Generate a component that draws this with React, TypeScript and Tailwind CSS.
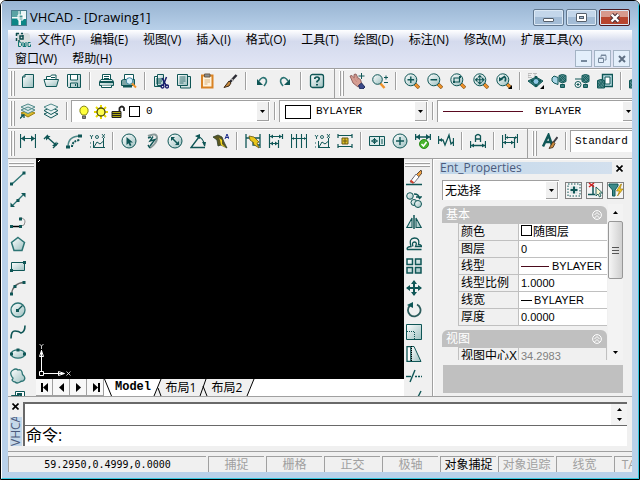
import type { ReactNode } from "react"

const TEAL = "#0f5656"

const lens = (
  <>
    <path d="M11 11l4 4" stroke="#8a5a20" strokeWidth="3.4" />
    <path d="M11 11l3.6 3.6" stroke="#f0932b" strokeWidth="2.2" />
    <circle cx="6.8" cy="6.8" r="6" fill="url(#glass)" />
  </>
)

const cylinder = (
  <>
    <path d="M8 2.500q3.500-2 7 0v6L11.500 10 8 8.500z" fill="#4f8a8a" />
    <path d="M9 3l5 5M11 3l4 4M9 6l3 3M14 3l-5 5M12 3l-3 3M15 6l-3 3" strokeWidth=".7" />
    <path d="M9.500 11.500h4v3h-4z" fill="#3d8080" />
  </>
)

const ordinate = (
  <>
    <path d="M4.500 8v7M4.500 14.500H16M5 14l3-5 3 2 3-2.500M14.500 5v9" />
    <path d="M1 2l1.500 2L4 2M2.500 4v2M13 1l3 4M16 1l-3 4" strokeWidth=".9" />
    <circle cx="8" cy="4" r="1.500" strokeWidth=".9" />
    <path d="M1 10h2M1 14h2" strokeDasharray="1 1" />
  </>
)

const bolt = <path d="M4 3l5 1 5 5-2 1 2 5-6-4 1-1-4-3z" fill="#e8c61c" stroke="#6b5a12" strokeWidth=".8" />

const icons: Record<string, ReactNode> = {
  new: (
    <path d="M5 1.500h8.500v13h-11V4zM5 1.500V4H2.500" fill="url(#glass)" />
  ),
  open: (
    <>
      <path d="M3.500 8V3.500h4l1-1.500h4.500v4" fill="#fff" />
      <path d="M1 6.500h11l3.500 0-2 7H3z" fill="url(#glass)" />
      <path d="M8 4.500h4" />
    </>
  ),
  save: (
    <>
      <path d="M1.500 1.500h13v13h-12l-1-1z" fill="url(#glass)" />
      <path d="M4.500 2v5h7V2" fill="#fff" />
      <path d="M4.500 14v-4h7v4M9.500 11v2" />
    </>
  ),
  print: (
    <>
      <path d="M4.500 7V1.500h8V7M6 3.500h5M6 5.500h5" fill="#fff" />
      <path d="M3 6.500h11l1.500 2v4h-14v-4z" fill="url(#glass)" />
      <path d="M2 9h13" strokeWidth="2" />
      <path d="M3.500 12.500v2h10v-2" fill="#fff" />
    </>
  ),
  preview: (
    <>
      <path d="M3.500 6V1.500h9V6" fill="#fff" />
      <path d="M2.500 6.500h11v6h-13v-5z" fill="#7da5a5" />
      <path d="M2 13.500h9" strokeWidth="2" />
      <circle cx="8.500" cy="8" r="3.300" fill="#d6f0fb" stroke="#3f87a0" />
      <path d="M11 10.500l4 4" stroke="#f0932b" strokeWidth="2" />
    </>
  ),
  cut: (
    <>
      <path d="M1.500 3.500h7v10h-7z" fill="url(#glass)" />
      <path d="M4.500 1.500h6v11h-6zM3 6h6M3 8h6M3 10h5" fill="url(#glass)" />
      <path d="M9 5l4.500 8M13.500 4L10 13" stroke="#161a6b" strokeWidth="1.500" />
      <circle cx="9.500" cy="13.500" r="1.500" stroke="#161a6b" strokeWidth="1.300" />
      <circle cx="14" cy="13.500" r="1.500" stroke="#161a6b" strokeWidth="1.300" />
    </>
  ),
  copy: (
    <>
      <path d="M4.500 3.500h10v11.500h-10z" fill="#d5e5e5" />
      <path d="M1.500 1.500h10v11h-10z" fill="url(#glass)" />
      <path d="M3.500 4h6M3.500 6h6M3.500 8h6M3.500 10h4" strokeWidth=".8" />
    </>
  ),
  paste: (
    <>
      <path d="M3 2.500h10.500v12H3z" fill="#fff3dc" stroke="#d98324" strokeWidth="2" />
      <path d="M5.500 1h5.500v3H5.500z" fill="#8a8f94" stroke="#6c5a45" />
      <path d="M5.500 7h5.500M5.500 9h5.500M5.500 11h3" stroke="#d9b27e" />
    </>
  ),
  brush: (
    <>
      <path d="M14.500 2L8 9" stroke="#2c2c34" strokeWidth="2.500" />
      <path d="M9.500 6l2 2" stroke="#b8b8b8" strokeWidth="1.500" />
      <path d="M7 8l2 2-2 3-5 1.500z" fill="#c98a3c" stroke="#3c2a18" />
    </>
  ),
  undo: (
    <>
      <path d="M5 8q3-5 6.500-2.500 2.500 3-1.500 7.500" strokeWidth="1.600" stroke="#2c7474" />
      <path d="M3 6v6h6z" fill={TEAL} stroke="none" />
    </>
  ),
  redo: (
    <>
      <path d="M11 8q-3-5-6.500-2.500Q2 8.500 6 13" strokeWidth="1.600" stroke="#2c7474" />
      <path d="M13 6v6H7z" fill={TEAL} stroke="none" />
    </>
  ),
  help: (
    <>
      <rect x="1.500" y="1.500" width="13" height="13" rx="2" fill="url(#glass)" strokeWidth="1.300" />
      <path d="M5.800 6q0-2 2.200-2t2.200 2q0 1-2.200 2.500v1" strokeWidth="1.700" />
      <path d="M7 11h2v1.500H7z" fill={TEAL} stroke="none" />
    </>
  ),
  pan: (
    <>
      <path d="M1 3l2-.5L5 5V1.500L7 1l2 4 2.500 1.500L13 12l-4 2-5-4z" fill="#d59d92" stroke="#8a5a58" strokeWidth=".9" />
      <path d="M3 3l5 6M6 2l3 5" stroke="#c08880" strokeWidth=".8" />
      <path d="M9.500 12.500l3-2.500 3.500 4-2 2h-3z" fill="#3c4a8a" stroke="#23305c" />
      <path d="M12.500 0v6M9.500 3h6" />
    </>
  ),
  zoomRealtime: (
    <>
      <path d="M8 10l4.500 5" stroke="#f0932b" strokeWidth="2.500" />
      <circle cx="5.500" cy="6.500" r="4.800" fill="url(#glass)" />
      <path d="M12 4.500h4M14 2.500v4M12 9.500h4" />
    </>
  ),
  zoomIn: (<>{lens}<path d="M3.500 6.800h6.600M6.800 3.500v6.600" strokeWidth="1.400" /></>),
  zoomOut: (<>{lens}<path d="M3.500 6.800h6.600" strokeWidth="1.400" /></>),
  zoomWindow: (<>{lens}<path d="M4 5h5.500v4H4z" strokeWidth="1.200" /><path d="M3 9h2M9 4h2" strokeWidth="2" /></>),
  zoomExtents: (<>{lens}<path d="M2.500 6.800h8.600M6.800 2.500v8.600M4.500 5L2.500 6.800l2 1.800M9 5l2 1.800-2 1.800M5 4.500l1.800-2 1.800 2M5 9l1.800 2 1.800-2" strokeWidth="1.100" /></>),
  zoomPrev: (
    <>
      {lens}
      <path d="M5 6l3.500-2.500q2 2 .5 5" strokeWidth="1.600" />
      <path d="M3 4v4.500l4-2z" fill={TEAL} stroke="none" />
      <path d="M16 12v4h-4z" fill="#000" stroke="none" />
    </>
  ),
  orbit: (
    <>
      <path d="M0 8l8-4 7 4-7 6z" fill="#3d8080" />
      <path d="M0 .5h4M0 2.500h3M0 .5v4h4M5 .5h4M7 .5v4" stroke="#b0b0b0" strokeWidth=".8" />
      <path d="M8 3v11M3 8h10" strokeWidth="2.500" />
      <circle cx="8" cy="8.500" r="3" fill="#8fc7e6" />
      <path d="M16 12v4h-4z" fill="#000" stroke="none" />
    </>
  ),
  shade: (<><path d="M3 3l4 1.500v7L3 10 1 8V5z" fill="#a9d5e6" />{cylinder}</>),
  lightAdd: (<>{cylinder}<path d="M1 6h7" /><circle cx="4" cy="11.500" r="3" fill="#fff" /><path d="M2.500 11.500h3M4 10v3" /></>),
  blockEdit: (
    <>
      <path d="M5.500 1.500h10v12h-10z" fill="#b8dbe2" strokeWidth="1.400" />
      <path d="M8 4h5v7H8z" fill="#fff" />
      <path d="M.5 7.500q3.500-2 7 0V15h-7z" fill="#4f8a8a" />
      <path d="M1 7l6 7M4 7l3 4M1 10l4 5M7 7l-6 7" strokeWidth=".7" />
    </>
  ),
  layerManager: (
    <>
      <path d="M1 10l7-3 7 3-7 4z" fill="#d8b92c" stroke="#a08010" />
      <path d="M1 7l7-3 7 3-7 3.500zM1 4l7-3 7 3-7 3.500z" fill="#dce9e9" stroke="#4f8a8a" />
      <path d="M0 15.500l3-3M1 12h3v3" strokeWidth="1.300" />
    </>
  ),
  layers: (
    <>
      <path d="M1 11l7-3 7 3-7 4z" fill="#eaf2f2" />
      <path d="M1 7.500l7-3 7 3-7 4z" fill="#eaf2f2" />
      <path d="M1 4l7-3 7 3-7 4z" fill="#eaf2f2" stroke="#4f8a8a" />
    </>
  ),
  dimLinear: (<><path d="M.5 1v14M15.500 1v14M1 5.500h14" strokeWidth="1.200" /><path d="M1 5.500l4-3v6zM15 5.500l-4-3v6z" fill={TEAL} stroke="none" /></>),
  dimAligned: (<><path d="M1 6l4-4M10 15l5-5M4 4l9 8" strokeWidth="1.400" /><path d="M3 3h4.500L3 7.500zM13.500 13H9l4.500-4.500z" fill={TEAL} stroke="none" /></>),
  dimArc: (<><path d="M2 14Q2 3 14 3" strokeWidth="1.500" stroke="#4f8a8a" /><path d="M6 14q0-6 8-7" strokeDasharray="2 1" strokeWidth="2" /><path d="M12 1.500h4v3h-4zM0 12.500h4v3H0z" fill={TEAL} stroke="none" /></>),
  dimOrdinate: ordinate,
  dimRadius: (<><circle cx="8" cy="8" r="7" fill="url(#glass)" /><path d="M5.500 4v8l2-1.800 1.400 2.800 1.600-.8-1.400-2.700h2.900z" fill={TEAL} stroke="none" /></>),
  dimJogged: (<><path d="M4 3q9-4 9 2 0 5-7 10" strokeWidth="2" stroke="#8a9a9a" /><path d="M9 3.500L6 8l5-1.500L6 13" strokeWidth="1.400" /><path d="M4 5l3-1M4 12l2 3" strokeWidth="1.500" /></>),
  dimDiameter: (<><circle cx="8" cy="8" r="7" fill="url(#glass)" /><path d="M5 5l6 6" strokeWidth="1.500" /><path d="M4 4h4L4 8zM12 12H8l4-4z" fill={TEAL} stroke="none" /></>),
  dimAngular: (<><path d="M15 14.500H1L9 4" strokeWidth="1.400" /><path d="M7 3q7 2 7.500 10" strokeWidth="1.200" /><path d="M5 3l5-2v5zM12 9h4l-1 5z" fill={TEAL} stroke="none" /></>),
  dimQuick: (<><path d="M0 4l5-2 4 2 2 5 3 6-6-3-3 1-1-6z" fill="#5c5820" stroke="#2c3c2c" strokeWidth=".8" /><path d="M6 5l3 2v4l4 4-5-3-1-5z" fill="#f4d71e" stroke="none" /><path d="M12 6l2-5 2 5M12.500 4.500h3" stroke="#1c2c8c" /></>),
  dimQuickDim: (<><path d="M1 1v14M15 1v14M1 5h14M8 8v4h7" strokeWidth="1.300" />{bolt}</>),
  dimBaseline: (<><path d="M1.500 1v14M14.500 1v5M10.500 7v8M1.500 3.500h13M1.500 10.500h9" strokeWidth="1.200" /><path d="M2 3.500l3-2v4zM14 3.500l-3-2v4zM2 10.500l3-2v4zM10 10.500l-3-2v4z" fill={TEAL} stroke="none" /></>),
  dimContinue: (<><path d="M.5 1v14M5.500 1v14M10.500 1v14M15.500 1v14M0 5.500h16" strokeWidth="1.100" /><path d="M1 5.500l2-1.500v3zM15 5.500L13 4v3z" fill={TEAL} stroke="none" /></>),
  dimSpace: ordinate,
  dimBreak: (<><path d="M1 1v4M15 1v4M1 2.500h14M1 11v4M15 11v4M1 13.500h14" strokeWidth="1.200" /><path d="M5 5h6v6H5z" fill="#e3c22a" stroke="#6b5a12" /><path d="M8 5v6M6 8h4" stroke="#6b5a12" /></>),
  tolerance: (<><path d="M.5 3.500h15v9H.5zM10.500 3.500v9" fill="#d9e9e9" /><path d="M2 8h7M5.500 5v6M13 6v5" /><circle cx="5.500" cy="8" r="1.800" /></>),
  centerMark: (<><circle cx="8" cy="8" r="7" fill="url(#glass)" /><path d="M8 4v8M4 8h8" strokeWidth="1.400" /></>),
  inspect: (<><path d="M.5 1v6M15.500 1v6M0 4h16" strokeWidth="1.500" /><path d="M1 4l4-3v6zM15 4l-4-3v6z" fill={TEAL} stroke="none" /><circle cx="9" cy="11" r="4.500" fill="#49b52c" stroke="#2d8a1c" /><path d="M6.500 11l2 2 3-4" stroke="#fff" strokeWidth="1.600" /></>),
  jogLine: (<><path d="M.5 3v8M.5 7H5l2 5L11 2l2 9 2-2M15.500 5v8" strokeWidth="1.300" /><path d="M1 7l3-2v4z" fill={TEAL} stroke="none" /></>),
  dimEdit: (<><path d="M.5 8v7M15.500 8v7M1 12.500h14M5.500 9V3q2.500-3 5 0v6M5.500 6h5" strokeWidth="1.300" /><path d="M1 12.500l3-2v4zM15 12.500l-3-2v4z" fill={TEAL} stroke="none" /></>),
  dimUpdate: (<><path d="M.5 2v13M12.500 4v11M3.500 1v6M15.500 1v9M1 9.500h11M4 4.500h11" strokeWidth="1.200" /><path d="M1 9.500l3-2v4zM12 9.500l-3-2v4zM4 4.500l2-1.500v3zM15 4.500L13 3v3z" fill={TEAL} stroke="none" /></>),
  textStyle: (<><path d="M1 13.500L6.500 2 10 12M3.500 9h5" strokeWidth="2.500" /><path d="M15.500 4L11 10" stroke="#3c3c44" strokeWidth="2" /><path d="M11 8.500l2 2-2 4-4 1z" fill="#c98a3c" stroke="#3c2a18" strokeWidth=".8" /></>),
  line: (<><path d="M2 14L14 3" strokeWidth="1.300" stroke="#2c7474" /><path d="M0 12.500h3v3H0zM12.500 1.500h3v3h-3z" fill={TEAL} stroke="none" /></>),
  xline: (<><path d="M2 14L14 2" strokeWidth="1.300" stroke="#2c7474" /><path d="M6.500 7h3v3h-3zM11 1h4.500v4.500zM.5 10.500V15H5z" fill={TEAL} stroke="none" /></>),
  pline: (<><path d="M1 12.500h10" stroke="#000" strokeWidth="1.500" /><path d="M10 4q5 0 5 4t-4 4" stroke="#909090" /><path d="M0 11h3v3H0zM9 11h3v3H9zM9 3.500h3v3H9z" fill={TEAL} stroke="none" /></>),
  polygon: (<path d="M8 1.500l6.500 5L12 14.500H4L1.500 6.500z" fill="url(#glass)" stroke="#2c7474" strokeWidth="1.500" />),
  rect: (<><path d="M1.500 4.500h13v8h-13z" fill="url(#glass)" /><path d="M0 11h3v3H0zM13 3h3v3h-3z" fill={TEAL} stroke="none" /></>),
  arc: (<><path d="M1.500 14Q3 3 14 2.500" stroke="#6a6a6a" strokeWidth="1.300" /><path d="M0 12.500h3v3H0zM12.500 1h3v3h-3zM3.500 5h3v3h-3z" fill={TEAL} stroke="none" /></>),
  circle: (<><circle cx="8" cy="8" r="7" fill="url(#glass)" strokeWidth="1.300" stroke="#2c7474" /><path d="M8 8l4.500-4.500" strokeWidth="1.300" /><path d="M6 7h3v3H6z" fill={TEAL} stroke="none" /></>),
  spline: (<path d="M1 14.500Q1 7 5 7t6 2q4-1 4-7.500" strokeWidth="1.600" />),
  ellipse: (<><ellipse cx="8" cy="8" rx="7" ry="4.200" fill="url(#glass)" stroke="#2c7474" strokeWidth="1.200" /><path d="M0 6.500h3v3H0zM13 6.500h3v3h-3zM6.500 2.500h3v3h-3z" fill={TEAL} stroke="none" /></>),
  cloud: (<path d="M3 2q3-2 5 0 3-1 4 2 0 3 2 4 2 3-1 5-2 0-3 1-3 2-5 0-2 0-3-2 2-2 0-3Q-1 4 3 2z" fill="url(#glass)" stroke="#2c7474" strokeWidth="1.300" />),
  insert: (<><path d="M5.500 1.500h9v8h-9z" fill="#fff" /><path d="M1.500 5.500h8v8h-8z" fill="#d5e5e5" /><path d="M7 4h4v5" strokeWidth="2" /><path d="M10 7h4v5h-4z" fill="#e3c22a" /></>),
  erase: (<><path d="M15 0l1 3-6 7-4-1z" fill="#f0a040" stroke="#5a4a3a" /><path d="M10 4l3 3-5 6-4-1z" fill="#fff" stroke="#5a5a6a" strokeWidth=".8" /><path d="M4.500 10.500l3 2.500" stroke="#d0402c" strokeWidth="2" /><path d="M0 14.500h16" strokeWidth="1.300" /></>),
  copyObj: (<><circle cx="4" cy="4" r="3.300" fill="url(#glass)" /><circle cx="8" cy="10.500" r="3" fill="url(#glass)" /><circle cx="12" cy="12" r="3.500" fill="url(#glass)" /><path d="M8 2q5 0 5 4M10 5h5l-2 2" strokeWidth="1.500" /></>),
  mirror: (<><path d="M8 1v14" strokeWidth="1.500" /><path d="M6 4v9.500H.8zM10 4v9.500h5.200z" fill="url(#glass)" strokeWidth="1.100" /></>),
  offset: (<path d="M1 13.500q0-3 4-3Q2.500 2 8.500 2q5.500 0 4 6.500 3 0 3 2H9.500q2-4.500-1-4.500T7 10.500M1 13.500h14.500" strokeWidth="1.300" />),
  array: (<path d="M1 1h5.500v5.500H1zM9.500 1H15v5.500H9.500zM1 9.500h5.500V15H1zM9.500 9.500H15V15H9.500z" fill="url(#glass)" strokeWidth="1.500" />),
  move: (<><path d="M8 1v14M1 8h14" strokeWidth="2" /><path d="M8 0l3 4H5zM8 16l3-4H5zM0 8l4-3v6zM16 8l-4-3v6z" fill={TEAL} stroke="none" /></>),
  rotate: (<><path d="M4 3.500a6.300 6.300 0 1 0 7-1" strokeWidth="1.800" stroke="#2c5c5c" /><path d="M1 3l6-3v6z" fill={TEAL} stroke="none" /></>),
  scale: (<><path d="M.5.5h15v15H.5z" fill="url(#glass)" /><path d="M1 7.500h7.500V15" strokeDasharray="1 1" /></>),
  stretch: (<><path d="M1 .5h4v15H1z" fill="#fff" strokeWidth="1.300" /><path d="M5 .5h3l7 15H5z" fill="url(#glass)" /><path d="M5.500 0v16" strokeDasharray="1 1" stroke="#000" /></>),
  trim: (<><path d="M0 8.500h5" strokeWidth="1.400" /><path d="M4 14l5-12" strokeWidth="1.400" /><path d="M9 8.500h7" strokeDasharray="2 1" strokeWidth="1.400" /></>),
  extend: (<><path d="M11 9l4-8" strokeWidth="1.400" /><path d="M0 13h10" strokeDasharray="2 1" /></>),
  pick: (<><path d="M2 2h12v12H2z" strokeDasharray="1.500 1.500" /><path d="M4.500 4.500h7v7h-7z" fill="#cfe0e0" stroke="none" /><path d="M8 4.500v7M4.500 8h7" strokeWidth="2" /></>),
  select: (<><path d="M6 3v10M1 12.500h7" strokeWidth="1.500" /><path d="M2 1l5 4M7 1L2 5" stroke="#d02020" strokeWidth="1.500" /><path d="M9 5v9l2-2 1.500 3 1.500-1-1.500-3h3z" fill="#fff8d0" strokeWidth=".9" /></>),
  filter: (<><path d="M1 2h9v2L7 8v6H4.500V8L1 4z" fill="#3d8a8a" /><path d="M13 2L8.500 9h3l-2 5 5.500-7h-3l1.500-5z" fill="#f4c81e" stroke="#a07a10" strokeWidth=".7" /></>),
  bulb: (<><path d="M6 11q-3-3-2-6 1.500-3 4-3t4 3q1 3-2 6z" fill="#ffff3c" stroke="#7a7a10" strokeWidth=".9" /><path d="M6.500 12h3v2.500h-3z" fill="#888" stroke="#444" strokeWidth=".8" /></>),
  sun: (<><path d="M8 1v14M1 8h14M3 3l10 10M13 3L3 13" stroke="#e8d800" strokeWidth="2" /><circle cx="8" cy="8" r="4" fill="#ffff50" stroke="#4a4a10" strokeWidth="1.300" /></>),
  lock: (<><path d="M9.500 8V4q2.500-3 4.500 0v3" stroke="#222" strokeWidth="1.800" /><path d="M2 7.500h9v6H2z" fill="#b0a810" stroke="#222" /><path d="M2 9.500h9M2 11.500h9" stroke="#222" /></>),
}

function Icon({ name }: { name: string }) {
  return (
    <svg viewBox="0 0 16 16" className="size-4 shrink-0" fill="none" stroke={TEAL}>
      {icons[name]}
    </svg>
  )
}

function Separator() {
  return (
    <div className="flex w-[9px] shrink-0 justify-center">
      <div className="h-[18px] w-0.5 border-l border-[#a0a0a0] bg-white" />
    </div>
  )
}

function Tools({ names }: { names: string[] }) {
  return (
    <>
      {names.map((name, i) =>
        name === "|" ? (
          <Separator key={i} />
        ) : (
          <button key={i} aria-label={name} className="flex h-[22px] w-[23px] shrink-0 items-center justify-center">
            <Icon name={name} />
          </button>
        )
      )}
    </>
  )
}

function Grip() {
  return (
    <div className="my-0.5 flex w-1.5 shrink-0 gap-px">
      <div className="w-0.5 border-r border-[#a0a0a0] bg-white" />
      <div className="w-0.5 border-r border-[#a0a0a0] bg-white" />
    </div>
  )
}

function ToolGroup({ children, last }: { children: ReactNode; last?: boolean }) {
  return (
    <div className={last ? "flex h-full shrink-0 pl-1" : "flex h-full shrink-0 border-r border-[#a0a0a0] pr-1.5 pl-0.5"}>
      <Grip />
      <div className="flex items-center pb-[5px]">{children}</div>
    </div>
  )
}

function ToolRow({ children }: { children: ReactNode }) {
  return (
    <div className="flex h-[30px] shrink-0 overflow-hidden border-t border-[#a0a0a0] shadow-[inset_0_1px_0_#fff]">
      {children}
    </div>
  )
}

function Arrow({ className = "" }: { className?: string }) {
  return (
    <svg viewBox="0 0 5 3" className={`h-[3px] w-[5px] ${className}`}>
      <path d="M0 0h5L2.500 3z" />
    </svg>
  )
}

interface ComboProps {
  label: string
  value: string
  className: string
  children?: ReactNode
}

function Combo({ label, value, className, children }: ComboProps) {
  return (
    <div className={`flex shrink-0 items-center border-t border-l border-[#a0a0a0] bg-white p-px ${className}`}>
      {children}
      <select aria-label={label} defaultValue={value} className="min-w-0 flex-1 appearance-none bg-transparent outline-none">
        <option>{value}</option>
      </select>
      <span className="pointer-events-none flex w-3 items-center justify-center self-stretch border-r border-b border-[#a0a0a0] bg-[#f0f0f0]">
        <Arrow />
      </span>
    </div>
  )
}

const standardTools = [
  "new", "open", "save", "|", "print", "preview", "|", "cut", "copy", "paste", "brush", "|",
  "undo", "redo", "|", "help",
]
const viewTools = [
  "pan", "zoomRealtime", "|", "zoomIn", "zoomOut", "zoomWindow", "zoomExtents", "zoomPrev", "|",
  "orbit", "shade", "lightAdd", "blockEdit", "|", "blockEdit",
]
const dimTools = [
  "dimLinear", "dimAligned", "dimArc", "dimOrdinate", "|",
  "dimRadius", "dimJogged", "dimDiameter", "dimAngular", "dimQuick", "|",
  "dimQuickDim", "dimBaseline", "dimContinue", "dimSpace", "dimBreak", "|",
  "tolerance", "centerMark", "inspect", "jogLine", "|", "dimEdit", "|", "dimUpdate",
]
const drawTools = ["line", "xline", "pline", "polygon", "rect", "arc", "circle", "spline", "ellipse", "cloud", "insert"]
const modifyTools = ["erase", "copyObj", "mirror", "offset", "array", "move", "rotate", "scale", "stretch", "trim", "extend"]

function SideTools({ names }: { names: string[] }) {
  return (
    <div className="w-7 shrink-0 overflow-hidden border-t border-[#a0a0a0]">
      <div className="mx-px mt-[3px] flex w-[25px] flex-col gap-px">
        <div className="h-0.5 border-b border-[#a0a0a0] bg-white" />
        <div className="h-0.5 border-b border-[#a0a0a0] bg-white" />
      </div>
      {names.map((name) => (
        <button key={name} aria-label={name} className="flex h-[22px] w-full items-center pl-0.5">
          <Icon name={name} />
        </button>
      ))}
    </div>
  )
}

const menuTop = ["文件(F)", "编辑(E)", "视图(V)", "插入(I)", "格式(O)", "工具(T)", "绘图(D)", "标注(N)", "修改(M)", "扩展工具(X)"]
const menuBottom = ["窗口(W)", "帮助(H)"]

function TitleBar() {
  const frame = "flex h-[17px] w-[31px] items-center justify-center rounded-[2px] border shadow-[inset_0_0_0_1px_#dbe8f5]"
  return (
    <header className="flex h-[29px] shrink-0 items-center pt-1 pl-[3px] text-[13px]">
      <svg viewBox="0 0 16 16" className="size-4">
        <path d="M0 0h16v16H0z" fill="#eaf6f6" />
        <path d="M1 1h9v6H1z" fill="#5aa3a3" />
        <path d="M1 8h7v7H1zM10 9h5v6h-5z" fill="#0b8787" />
        <path d="M8 1v14M1 8h14M7 5h5v5H7z" stroke="#fff" fill="#3f9494" />
        <path d="M0 .5h16M.5 0v16M15.500 0v16M0 15.500h16" stroke="#4a7c8c" />
      </svg>
      <h1 className="flex-1 pl-[3px]">VHCAD - [Drawing1]</h1>
      <div className="flex gap-0.5 pr-0.5">
        <button aria-label="最小化" className={`${frame} border-[#62788f] bg-linear-to-b from-[#c3d6ea] from-50% to-[#a3bcd6] to-50%`}>
          <span className="mt-1 h-1 w-[11px] rounded-[1px] border border-[#555f6b] bg-white" />
        </button>
        <button aria-label="最大化" className={`${frame} border-[#62788f] bg-linear-to-b from-[#c3d6ea] from-50% to-[#a3bcd6] to-50%`}>
          <span className="flex h-[9px] w-[11px] items-center justify-center rounded-[1px] border border-[#555f6b] bg-white">
            <span className="h-[3px] w-[5px] border border-[#555f6b] bg-[#a3bcd6]" />
          </span>
        </button>
        <button aria-label="关闭" className={`${frame} border-[#4d1a20] bg-linear-to-b from-[#d79a8d] from-50% to-[#b8462f] to-50%`}>
          <svg viewBox="0 0 12 10" className="h-2.5 w-3">
            <path d="M2.500 1.500l7 7M9.500 1.500l-7 7" stroke="#4d3038" strokeWidth="4.400" />
            <path d="M2.500 1.500l7 7M9.500 1.500l-7 7" stroke="#fff" strokeWidth="2.400" />
          </svg>
        </button>
      </div>
    </header>
  )
}

function MenuBar() {
  const child = "flex h-[17px] w-[17px] items-center justify-center border border-[#a3b3c4] bg-[#e3effb]"
  return (
    <nav className="flex h-[38px] shrink-0 flex-col bg-linear-to-b from-white via-[#d4daed] via-30% to-[#e2e6f5] text-[12px] leading-[19px]">
      <div className="flex h-[19px] items-center gap-[15px] pl-[7px] whitespace-nowrap">
        <svg viewBox="0 0 16 16" className="-mr-2 size-4 shrink-0">
          <path d="M2 1h11l2 2v12H2z" fill="#d9dede" />
          <path d="M1 1.500h3M6 1.500h2M1.500 1v3M1.500 6v3M3 9h2M8 3v4M5 4h3v3H5z" stroke="#0c4c4c" strokeWidth="1.500" fill="none" />
          <path d="M3.500 10v4.500h2l1-1v-2L5.500 10zM8 10v4.500h3V10M9.500 11v3M15.500 10.500h-2.500v4h2.500v-2" stroke="#0c7474" fill="none" />
        </svg>
        {menuTop.map((item) => (
          <button key={item}>{item}</button>
        ))}
      </div>
      <div className="flex h-[19px] items-center gap-[15px] pl-[7px]">
        {menuBottom.map((item) => (
          <button key={item}>{item}</button>
        ))}
        <div className="ml-auto flex gap-0.5 pr-0.5">
          <button aria-label="最小化窗口" className={child}>
            <span className="mt-1 h-0.5 w-1.5 bg-[#76889c]" />
          </button>
          <button aria-label="还原窗口" className={child}>
            <svg viewBox="0 0 9 9" className="size-[9px]" fill="none" stroke="#76889c">
              <path d="M3 3V1.500h5V6H6.500M.5 4.500h5v4h-5zM3 1h5M.5 4h5" />
            </svg>
          </button>
          <button aria-label="关闭窗口" className={child}>
            <svg viewBox="0 0 8 8" className="size-2" stroke="#5f7084" strokeWidth="2">
              <path d="M1 1l6 6M7 1L1 7" />
            </svg>
          </button>
        </div>
      </div>
    </nav>
  )
}

function Canvas() {
  return (
    <main className="flex min-w-0 flex-1 flex-col">
      <div className="flex min-h-0 flex-1 flex-col justify-between bg-black pl-0.5">
        <svg viewBox="0 0 3 4" className="h-1 w-[3px]" fill="#fff">
          <path d="M0 3h1v1H0zM1 2h1v1H1z" />
        </svg>
        <svg viewBox="0 0 36 38" className="h-[38px] w-9" fill="none" stroke="#fff">
          <path d="M1.500 30.500h4v4h-4zM3.500 30V9M1.500 15.500l2-6 2 6zM6 32.500h20M20.500 30.500l6 2-6 2z" />
          <path d="M1.500 3l2 2 2-2M3.500 5v3M28.500 30.500l4 4M32.500 30.500l-4 4" strokeWidth=".8" />
        </svg>
      </div>
      <LayoutTabs />
    </main>
  )
}

const navGlyphs = ["M1 0h2v9H1zM8 0v9L3 4.500z", "M7 0v9L2 4.500z", "M2 0v9l5-4.500z", "M7 0h2v9H7zM2 0v9l5-4.500z"]

function LayoutTabs() {
  return (
    <div className="flex h-[17px] shrink-0 bg-white text-[12px] leading-[17px]">
      {navGlyphs.map((d, i) => (
        <button key={d} aria-label={`nav ${i + 1}`} className="flex w-[17px] items-center justify-center border-r border-b border-[#a0a0a0] bg-[#f8f8f8]">
          <svg viewBox="0 0 9 9" className="size-[9px]">
            <path d={d} />
          </svg>
        </button>
      ))}
      <svg viewBox="0 0 9 17" className="h-[17px] w-[9px]">
        <path d="M.5 0l7 17" stroke="#000" />
      </svg>
      <button className="w-10 text-center font-bold [font-family:'Liberation_Mono',monospace]">Model</button>
      <svg viewBox="0 0 10 17" className="h-[17px] w-2.5">
        <path d="M8 0h2v17H1z" fill="#f0f0f0" />
        <path d="M1 17L8 0M5 9l3 8" stroke="#000" fill="none" />
      </svg>
      <button className="w-9 bg-[#f0f0f0]">布局1</button>
      <svg viewBox="0 0 10 17" className="h-[17px] w-2.5 bg-[#f0f0f0]">
        <path d="M1 17L7 0M4 7l4 10" stroke="#000" fill="none" />
      </svg>
      <button className="w-9 bg-[#f0f0f0]">布局2</button>
      <svg viewBox="0 0 10 17" className="h-[17px] w-2.5">
        <path d="M0 0h9L2 17H0z" fill="#f0f0f0" />
        <path d="M2 17L9 0" stroke="#000" />
      </svg>
    </div>
  )
}

const basicProps: { name: string; value: string; mark?: ReactNode }[] = [
  { name: "颜色", value: "随图层", mark: <span className="mr-px inline-block size-[11px] border border-black" /> },
  { name: "图层", value: "0" },
  { name: "线型", value: "BYLAYER", mark: <span className="mr-[3px] inline-block h-px w-7 bg-[#4a0a1c] align-middle" /> },
  { name: "线型比例", value: "1.0000" },
  { name: "线宽", value: "BYLAYER", mark: <span className="mr-0.5 inline-block h-px w-[11px] bg-black align-middle" /> },
  { name: "厚度", value: "0.0000" },
]

function Section({ title, children }: { title: string; children: ReactNode }) {
  return (
    <section>
      <h2 className="flex h-[17px] items-center justify-between rounded-t-md bg-[#c0c0c0] px-1 text-white">
        {title}
        <svg viewBox="0 0 10 10" className="mr-px size-2.5" fill="none" stroke="#fff">
          <circle cx="5" cy="5" r="4.400" />
          <path d="M2.500 5L5 2.500 7.500 5M2.500 8L5 5.500 7.500 8" />
        </svg>
      </h2>
      <table className="ml-4 w-[149px] table-fixed border-collapse text-left">
        <tbody>{children}</tbody>
      </table>
    </section>
  )
}

function PropertyRow({ name, value, mark, dim }: { name: string; value: string; mark?: ReactNode; dim?: boolean }) {
  const latin = /^[\w.]+$/.test(value)
  return (
    <tr className="h-[17px] whitespace-nowrap">
      <th scope="row" className="w-[60px] border border-[#c0c0c0] pl-0.5 font-normal">
        {name}
      </th>
      <td className={dim ? "border border-[#c0c0c0] pl-0.5 text-[#808080]" : "border border-r-0 border-[#c0c0c0] bg-white pl-0.5"}>
        {mark}
        <span className={latin ? "text-[11px]" : ""}>{value}</span>
      </td>
    </tr>
  )
}

function PropertiesPanel() {
  const button = "flex size-[17px] items-center justify-center border border-[#808080] bg-[#f4f4f4]"
  return (
    <aside className="flex w-[200px] shrink-0 flex-col border-t border-l border-[#a0a0a0] pr-2 pl-[7px] shadow-[inset_1px_1px_0_#fff]">
      <div className="mt-[3px] flex h-3 items-center justify-between">
        <h2 className="h-3 w-[172px] bg-linear-to-r from-[#c3d8ea] to-[#d3e0ee] text-[12px] leading-3 text-[#4a5a7c]">Ent_Properties</h2>
        <button aria-label="关闭面板" className="mr-px">
          <svg viewBox="0 0 7 7" className="size-[7px]" stroke="#000" strokeWidth="1.600">
            <path d="M.5.5l6 6M6.500.5l-6 6" />
          </svg>
        </button>
      </div>
      <div className="mt-1.5 flex items-center gap-1 pl-0.5 text-[12px]">
        <Combo label="选择" value="无选择" className="mr-0.5 h-5 w-[117px] pl-0.5" />
        {["pick", "select", "filter"].map((name) => (
          <button key={name} aria-label={name} className={button}>
            <Icon name={name} />
          </button>
        ))}
      </div>
      <div className="mt-1 flex h-[156px] pl-0.5">
        <div className="w-[165px] overflow-hidden pt-0.5 text-[12px] leading-4 [font-family:'Liberation_Sans','Noto_Sans_CJK_SC',sans-serif]">
          <Section title="基本">
            {basicProps.map((row) => (
              <PropertyRow key={row.name} {...row} />
            ))}
          </Section>
          <div className="h-1" />
          <Section title="视图">
            <PropertyRow name="视图中心X" value="34.2983" dim />
          </Section>
        </div>
        <div className="ml-px flex w-[15px] flex-col items-center bg-[#f3f3f3]">
          <Arrow className="my-[7px] rotate-180" />
          <div className="flex h-[58px] w-full flex-col items-center justify-center gap-0.5 rounded-[2px] border border-[#979797] bg-linear-to-r from-[#f5f5f5] to-[#d0d0d0]">
            <div className="h-px w-[7px] bg-[#555]" />
            <div className="h-px w-[7px] bg-[#555]" />
            <div className="h-px w-[7px] bg-[#555]" />
          </div>
          <Arrow className="mt-auto mb-1.5" />
        </div>
      </div>
      <div className="mt-[5px] mr-px ml-[3px] h-7 bg-[#c0c0c0]" />
    </aside>
  )
}

function CommandLine() {
  return (
    <div className="flex h-[55px] shrink-0 border-t border-[#a0a0a0] pt-[5px] pr-[5px] pb-[5px]">
      <div className="flex w-[15px] shrink-0 flex-col items-center justify-between">
        <button aria-label="关闭命令行" className="mt-px">
          <svg viewBox="0 0 7 7" className="size-[7px]" stroke="#000" strokeWidth="1.600">
            <path d="M.5.5l6 6M6.500.5l-6 6" />
          </svg>
        </button>
        <span className="h-[29px] w-3 rotate-180 overflow-hidden bg-[#c5d8ea] text-[12px] leading-3 text-[#4a5a7c] [writing-mode:vertical-rl]">VHCAD</span>
      </div>
      <div className="flex min-w-0 flex-1 flex-col border-t-2 border-l-2 border-[#696969] bg-white">
        <div className="flex h-[21px] shrink-0 justify-end">
          <div className="flex w-4 flex-col items-center justify-between bg-[#f3f3f3] py-1">
            <Arrow className="rotate-180" />
            <Arrow />
          </div>
        </div>
        <div className="flex min-h-0 flex-1 items-start border-t border-[#696969] text-[16px] leading-[18px]">
          <label htmlFor="command" className="pl-px whitespace-nowrap">命令:</label>
          <input id="command" className="h-[18px] min-w-0 flex-1 outline-none" />
        </div>
      </div>
    </div>
  )
}

const toggles = ["捕捉", "栅格", "正交", "极轴", "对象捕捉", "对象追踪", "线宽", "TABLET"]

function StatusBar() {
  const cell = "h-4 shrink-0 overflow-hidden border-t border-l border-[#a0a0a0] whitespace-nowrap"
  return (
    <footer className="flex h-[21px] shrink-0 gap-0.5 overflow-hidden border-t border-[#a0a0a0] pt-1 text-[12px] leading-4">
      <div className={`${cell} w-[198px] text-center text-[10px] [font-family:'DejaVu_Sans_Mono',monospace]`}>59.2950,0.4999,0.0000</div>
      {toggles.map((name) => (
        <button key={name} className={name === "对象捕捉" ? `${cell} w-14 text-black` : `${cell} w-14 text-[#a0a0a0]`}>
          {name}
        </button>
      ))}
    </footer>
  )
}

export default function App() {
  return (
    <div className="h-screen overflow-hidden rounded-t-md border border-black text-black [font-family:'Open_Sans','Noto_Sans_CJK_SC',sans-serif]">
      <svg width="0" height="0" className="absolute">
        <linearGradient id="glass" x1="0" y1="0" x2="1" y2="1">
          <stop offset="0" stopColor="#ffffff" />
          <stop offset="1" stopColor="#9cc0c0" />
        </linearGradient>
      </svg>
      <div className="flex h-full flex-col border-r border-b border-l border-r-[#35c8e0] border-b-[#35c8e0] border-l-white bg-[#b9d1ea] bg-linear-to-b from-[#98b4d2] to-[#b9d1ea] to-[30px] px-1.5 pb-1.5">
        <TitleBar />
        <MenuBar />
        <div className="flex min-h-0 flex-1 flex-col bg-[#f0f0f0]">
          <ToolRow>
            <ToolGroup><Tools names={standardTools} /></ToolGroup>
            <ToolGroup last><Tools names={viewTools} /></ToolGroup>
          </ToolRow>
          <ToolRow>
            <div className="flex shrink-0 pl-0.5">
              <Grip />
              <div className="flex items-center pb-[5px] text-[11px] [font-family:'Liberation_Mono',monospace]">
                <Tools names={["layerManager", "layers", "|"]} />
                <Combo label="图层" value="0" className="h-[22px] w-[199px]">
                  <div className="flex items-center gap-px pr-1.5 pl-[3px]">
                    <Icon name="bulb" />
                    <Icon name="sun" />
                    <Icon name="lock" />
                    <span className="ml-0.5 size-[11px] border border-black" />
                  </div>
                </Combo>
                <Separator />
                <Combo label="颜色" value="BYLAYER" className="h-[22px] w-[149px]">
                  <span className="mr-[5px] ml-1 h-3.5 w-[26px] border border-black" />
                </Combo>
                <Separator />
                <Combo label="线型" value="BYLAYER" className="h-[22px] w-[199px]">
                  <span className="mr-3 ml-1 h-px w-20 bg-[#5a0a20]" />
                </Combo>
              </div>
            </div>
          </ToolRow>
          <ToolRow>
            <ToolGroup><Tools names={dimTools} /></ToolGroup>
            <ToolGroup last>
              <Tools names={["textStyle", "|"]} />
              <div className="text-[11px] [font-family:'Liberation_Mono',monospace]">
                <Combo label="文字样式" value="Standard" className="h-[22px] w-[199px] pl-1" />
              </div>
            </ToolGroup>
          </ToolRow>
          <div className="flex min-h-0 flex-1 overflow-hidden">
            <SideTools names={drawTools} />
            <Canvas />
            <SideTools names={modifyTools} />
            <PropertiesPanel />
          </div>
          <CommandLine />
          <StatusBar />
        </div>
      </div>
    </div>
  )
}
